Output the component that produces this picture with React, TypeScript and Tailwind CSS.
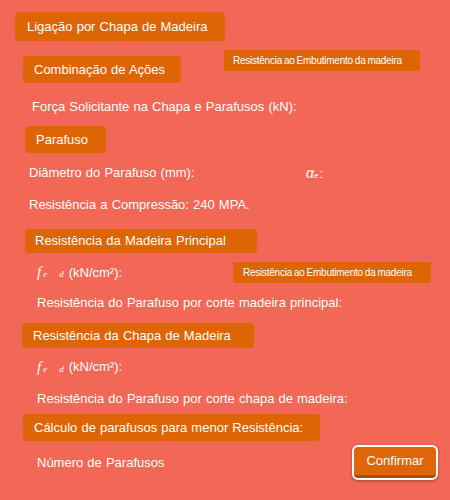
import React from "react";

const font = { fontFamily: '"Liberation Sans", Arial, sans-serif' };

function Box({ children, className }: { children: React.ReactNode; className: string }) {
  return (
    <div className={`flex items-center rounded-[4px] bg-[#de6505] text-[13px] text-white ${className}`}>
      {children}
    </div>
  );
}

function Tag({ className }: { className: string }) {
  return (
    <div className={`flex h-[21px] items-center bg-[#de6505] text-[10px] tracking-[-0.25px] text-white [word-spacing:-0.5px] ${className}`}>
      Resistência ao Embutimento da madeira
    </div>
  );
}

function Line({ children, className }: { children: React.ReactNode; className: string }) {
  return (
    <div className={`flex h-[16px] items-center text-[13px] text-white ${className}`}>
      {children}
    </div>
  );
}

function Fed() {
  return (
    <span className="mr-[5px] inline-flex items-baseline" style={{ fontFamily: '"Liberation Serif", serif' }}>
      <span className="text-[15px] italic">f</span>
      <span className="ml-[2px] text-[9px] italic">e</span>
      <span className="ml-[12px] text-[9px] italic">d</span>
    </span>
  );
}

export default function App() {
  return (
    <div className="h-[500px] w-[450px] overflow-hidden bg-[#f26755] pt-[12px] [word-spacing:0.5px]" style={font}>
      <Box className="ml-[15px] h-[29px] w-[210px] pl-[12px]">Ligação por Chapa de Madeira</Box>

      <div className="mt-[9px] flex items-start">
        <Box className="ml-[23px] mt-[6px] h-[27px] w-[158px] pl-[11px]">Combinação de Ações</Box>
        <Tag className="ml-[43px] w-[196px] pl-[9px]" />
      </div>

      <Line className="mt-[16px] pl-[32px]">Força Solicitante na Chapa e Parafusos (kN):</Line>

      <Box className="ml-[25px] mt-[11px] h-[27px] w-[81px] pl-[11px]">Parafuso</Box>

      <div className="mt-[12px] flex h-[16px] items-center text-[13px] text-white">
        <span className="w-[306px] pl-[29px]">Diâmetro do Parafuso (mm):</span>
        <span className="inline-flex items-baseline">
          <span className="text-[14px] italic">α</span>
          <span className="text-[8px] italic">e</span>
          <span className="ml-[1px]">:</span>
        </span>
      </div>

      <Line className="mt-[16px] pl-[29px]">Resistência a Compressão: 240 MPA.</Line>

      <Box className="ml-[25px] mt-[16px] h-[24px] w-[232px] pl-[10px]">Resistência da Madeira Principal</Box>

      <div className="mt-[9px] flex items-center">
        <Line className="w-[233px] pl-[37px]">
          <Fed />
          (kN/cm²):
        </Line>
        <Tag className="w-[198px] pl-[10px]" />
      </div>

      <Line className="mt-[12px] pl-[37px]">Resistência do Parafuso por corte madeira principal:</Line>

      <Box className="ml-[22px] mt-[12px] h-[25px] w-[232px] pl-[11px]">Resistência da Chapa de Madeira</Box>

      <Line className="mt-[11px] pl-[37px]">
        <Fed />
        (kN/cm²):
      </Line>

      <Line className="mt-[16px] pl-[37px]">Resistência do Parafuso por corte chapa de madeira:</Line>

      <Box className="ml-[23px] mt-[7px] h-[27px] w-[297px] pl-[11px]">Cálculo de parafusos para menor Resistência:</Box>

      <div className="mt-[4px] flex items-center">
        <span className="w-[352px] pl-[37px] text-[13px] text-white">Número de Parafusos</span>
        <button className="h-[35px] w-[86px] rounded-[6px] border-[2px] border-white bg-white shadow-[0_1px_3px_rgba(0,0,0,0.35)]">
          <span className="flex h-full w-full items-center justify-center rounded-[4px] border-b-[3px] border-[#a84b05] bg-[#df6608] text-[13px] text-white [word-spacing:0]">
            Confirmar
          </span>
        </button>
      </div>
    </div>
  );
}
